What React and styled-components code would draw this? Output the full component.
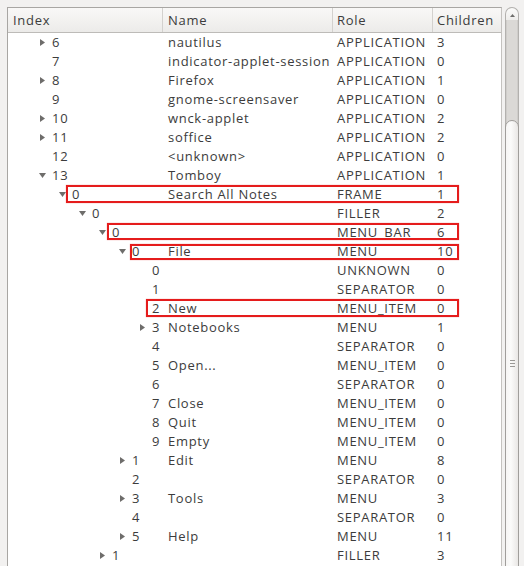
import React from "react";
import styled, { createGlobalStyle } from "styled-components";

const GlobalStyle = createGlobalStyle`
  html, body {
    margin: 0;
    padding: 0;
    background: #f2f1f0;
  }
  body {
    font-family: "Open Sans", "DejaVu Sans", sans-serif;
    font-size: 13px;
    letter-spacing: 0.7px;
    color: #3c3c3c;
  }
`;

const Page = styled.div`
  height: 566px;
  overflow: hidden;
  display: flex;
  align-items: flex-start;
  padding: 7px 0 0 8px;
  box-sizing: border-box;
`;

const Frame = styled.div`
  width: 493px;
  height: 600px;
  background: #ffffff;
  border: 1px solid #a8a6a3;
  border-right-color: #c4c2bf;
  box-sizing: content-box;
  margin-left: -1px;
`;

const COLS = "155px 170px 100px 68px";

const Header = styled.div`
  display: grid;
  grid-template-columns: ${COLS};
  height: 24px;
  background: linear-gradient(#f9f8f7, #ecebe9);
  border-bottom: 1px solid #bdbbb8;
`;

const HeadCell = styled.div`
  display: flex;
  align-items: center;
  padding-left: ${(p) => p.$pad || 4}px;
  border-right: ${(p) => (p.$last ? "none" : "1px solid #d3d1ce")};
  color: #3c3c3c;
`;

const Row = styled.div`
  position: relative;
  display: grid;
  grid-template-columns: ${COLS};
  height: 19px;
  line-height: 19px;
  white-space: nowrap;
`;

const IndexCell = styled.div`
  display: flex;
  align-items: center;
  padding-left: ${(p) => 28 + p.$level * 20}px;
  overflow: visible;
`;

const Expander = styled.span`
  width: 12px;
  margin-right: 4px;
  display: inline-flex;
  align-items: center;
  justify-content: center;
  flex: none;
`;

const Cell = styled.div`
  padding-left: ${(p) => p.$pad}px;
  overflow: hidden;
`;

const Highlight = styled.span`
  position: absolute;
  right: 42px;
  border: 2px solid #e51c1c;
  box-shadow: 0 0 1px rgba(229, 28, 28, 0.5);
  pointer-events: none;
`;

const Scrollbar = styled.div`
  display: flex;
  flex-direction: column;
  width: 14px;
  margin-left: 3px;
  flex: none;
`;

const Stepper = styled.div`
  height: 13px;
  border: 1px solid #b3b1ae;
  border-bottom: none;
  border-radius: 7px 7px 0 0;
  background: linear-gradient(#fbfbfa, #eeedeb);
  display: flex;
  justify-content: center;
  padding-top: 6px;
  box-sizing: border-box;
`;

const Trough = styled.div`
  height: 110px;
  background: #dbd9d6;
  border-left: 1px solid #b3b1ae;
  border-right: 1px solid #b3b1ae;
  box-shadow: inset 1px 0 0 #cfcdca, inset -1px 0 0 #cfcdca;
`;

const Thumb = styled.div`
  height: 484px;
  margin-top: -10px;
  background: linear-gradient(90deg, #f6f5f4, #fbfbfa 40%, #e9e7e5);
  border: 1px solid #a09e9b;
  border-radius: 7px;
  display: flex;
  flex-direction: column;
  align-items: center;
  justify-content: center;
  gap: 2px;
`;

const Grip = styled.span`
  width: 5px;
  height: 1px;
  background: #9a9895;
`;

const Right = () => (
  <svg width="5" height="7" viewBox="0 0 5 7">
    <path d="M0 0 L5 3.5 L0 7 Z" fill="#6e6d6b" />
  </svg>
);

const Down = () => (
  <svg width="7" height="5" viewBox="0 0 7 5">
    <path d="M0 0 L7 0 L3.5 5 Z" fill="#6e6d6b" />
  </svg>
);

const rows = [
  [0, "r", "6", "nautilus", "APPLICATION", "3"],
  [0, "", "7", "indicator-applet-session", "APPLICATION", "0"],
  [0, "r", "8", "Firefox", "APPLICATION", "1"],
  [0, "", "9", "gnome-screensaver", "APPLICATION", "0"],
  [0, "r", "10", "wnck-applet", "APPLICATION", "2"],
  [0, "r", "11", "soffice", "APPLICATION", "2"],
  [0, "", "12", "<unknown>", "APPLICATION", "0"],
  [0, "d", "13", "Tomboy", "APPLICATION", "1"],
  [1, "d", "0", "Search All Notes", "FRAME", "1", { left: 58, top: 0, h: 18 }],
  [2, "d", "0", "", "FILLER", "2"],
  [3, "d", "0", "", "MENU_BAR", "6", { left: 99, top: 0, h: 17 }],
  [4, "d", "0", "File", "MENU", "10", { left: 122, top: 2, h: 16 }],
  [5, "", "0", "", "UNKNOWN", "0"],
  [5, "", "1", "", "SEPARATOR", "0"],
  [5, "", "2", "New", "MENU_ITEM", "0", { left: 138, top: 0, h: 18 }],
  [5, "r", "3", "Notebooks", "MENU", "1"],
  [5, "", "4", "", "SEPARATOR", "0"],
  [5, "", "5", "Open...", "MENU_ITEM", "0"],
  [5, "", "6", "", "SEPARATOR", "0"],
  [5, "", "7", "Close", "MENU_ITEM", "0"],
  [5, "", "8", "Quit", "MENU_ITEM", "0"],
  [5, "", "9", "Empty", "MENU_ITEM", "0"],
  [4, "r", "1", "Edit", "MENU", "8"],
  [4, "", "2", "", "SEPARATOR", "0"],
  [4, "r", "3", "Tools", "MENU", "3"],
  [4, "", "4", "", "SEPARATOR", "0"],
  [4, "r", "5", "Help", "MENU", "11"],
  [3, "r", "1", "", "FILLER", "3"],
];

const App = () => {
  return (
    <Page>
      <GlobalStyle />
      <Frame>
        <Header>
          <HeadCell $pad={5}>Index</HeadCell>
          <HeadCell $pad={5}>Name</HeadCell>
          <HeadCell>Role</HeadCell>
          <HeadCell $last>Children</HeadCell>
        </Header>
        {rows.map(([level, exp, idx, name, role, kids, hl], i) => (
          <Row key={i}>
            <IndexCell $level={level}>
              <Expander>
                {exp === "r" && <Right />}
                {exp === "d" && <Down />}
              </Expander>
              {idx}
            </IndexCell>
            <Cell $pad={5}>{name}</Cell>
            <Cell $pad={4}>{role}</Cell>
            <Cell $pad={4}>{kids}</Cell>
            {hl && (
              <Highlight
                style={{ left: hl.left, top: hl.top, height: hl.h - 4 }}
              />
            )}
          </Row>
        ))}
      </Frame>
      <Scrollbar>
        <Stepper>
          <svg width="5" height="3" viewBox="0 0 5 3">
            <path d="M0 3 L2.5 0 L5 3 Z" fill="#6e6d6b" />
          </svg>
        </Stepper>
        <Trough />
        <Thumb>
          <Grip />
          <Grip />
          <Grip />
        </Thumb>
      </Scrollbar>
    </Page>
  );
};

export default App;
